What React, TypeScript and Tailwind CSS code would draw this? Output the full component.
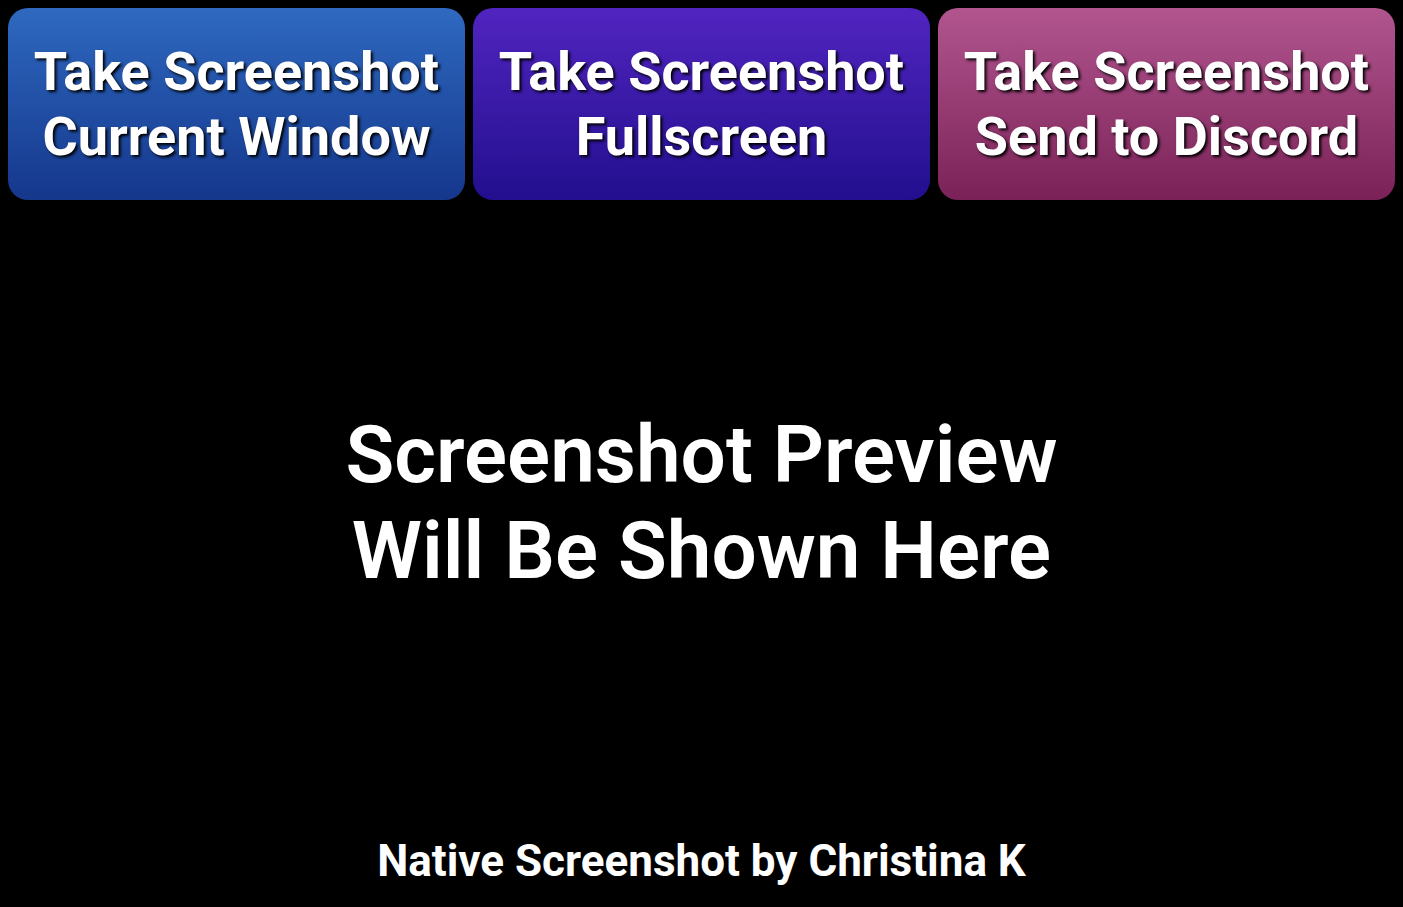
const buttons = [
  { top: "Take Screenshot", bottom: "Current Window", cls: "from-[#2f69c0] to-[#15378c]" },
  { top: "Take Screenshot", bottom: "Fullscreen", cls: "from-[#5124c0] to-[#220e8e]" },
  { top: "Take Screenshot", bottom: "Send to Discord", cls: "from-[#b2558f] to-[#7a2258]" },
];

export default function App() {
  return (
    <main
      className="flex h-[907px] flex-col bg-black text-white"
      style={{ fontFamily: "Roboto, 'Liberation Sans', sans-serif" }}
    >
      {/* Action buttons */}
      <div className="grid grid-cols-3 gap-2 p-2">
        {buttons.map((b) => (
          <button
            key={b.bottom}
            className={`flex h-[192px] flex-col items-center justify-center rounded-[20px] bg-gradient-to-b ${b.cls} text-[54px] font-bold leading-[65px] text-white [text-shadow:2px_2px_3px_#000]`}
          >
            <span>{b.top}</span>
            <span>{b.bottom}</span>
          </button>
        ))}
      </div>

      {/* Preview */}
      <div className="flex flex-1 items-center justify-center pb-[34px] text-center text-[80px] font-semibold leading-[96px]">
        <p>
          Screenshot Preview
          <br />
          Will Be Shown Here
        </p>
      </div>

      {/* Footer */}
      <footer className="pb-4 text-center text-[44px] font-bold leading-[60px]">
        Native Screenshot by Christina K
      </footer>
    </main>
  );
}
